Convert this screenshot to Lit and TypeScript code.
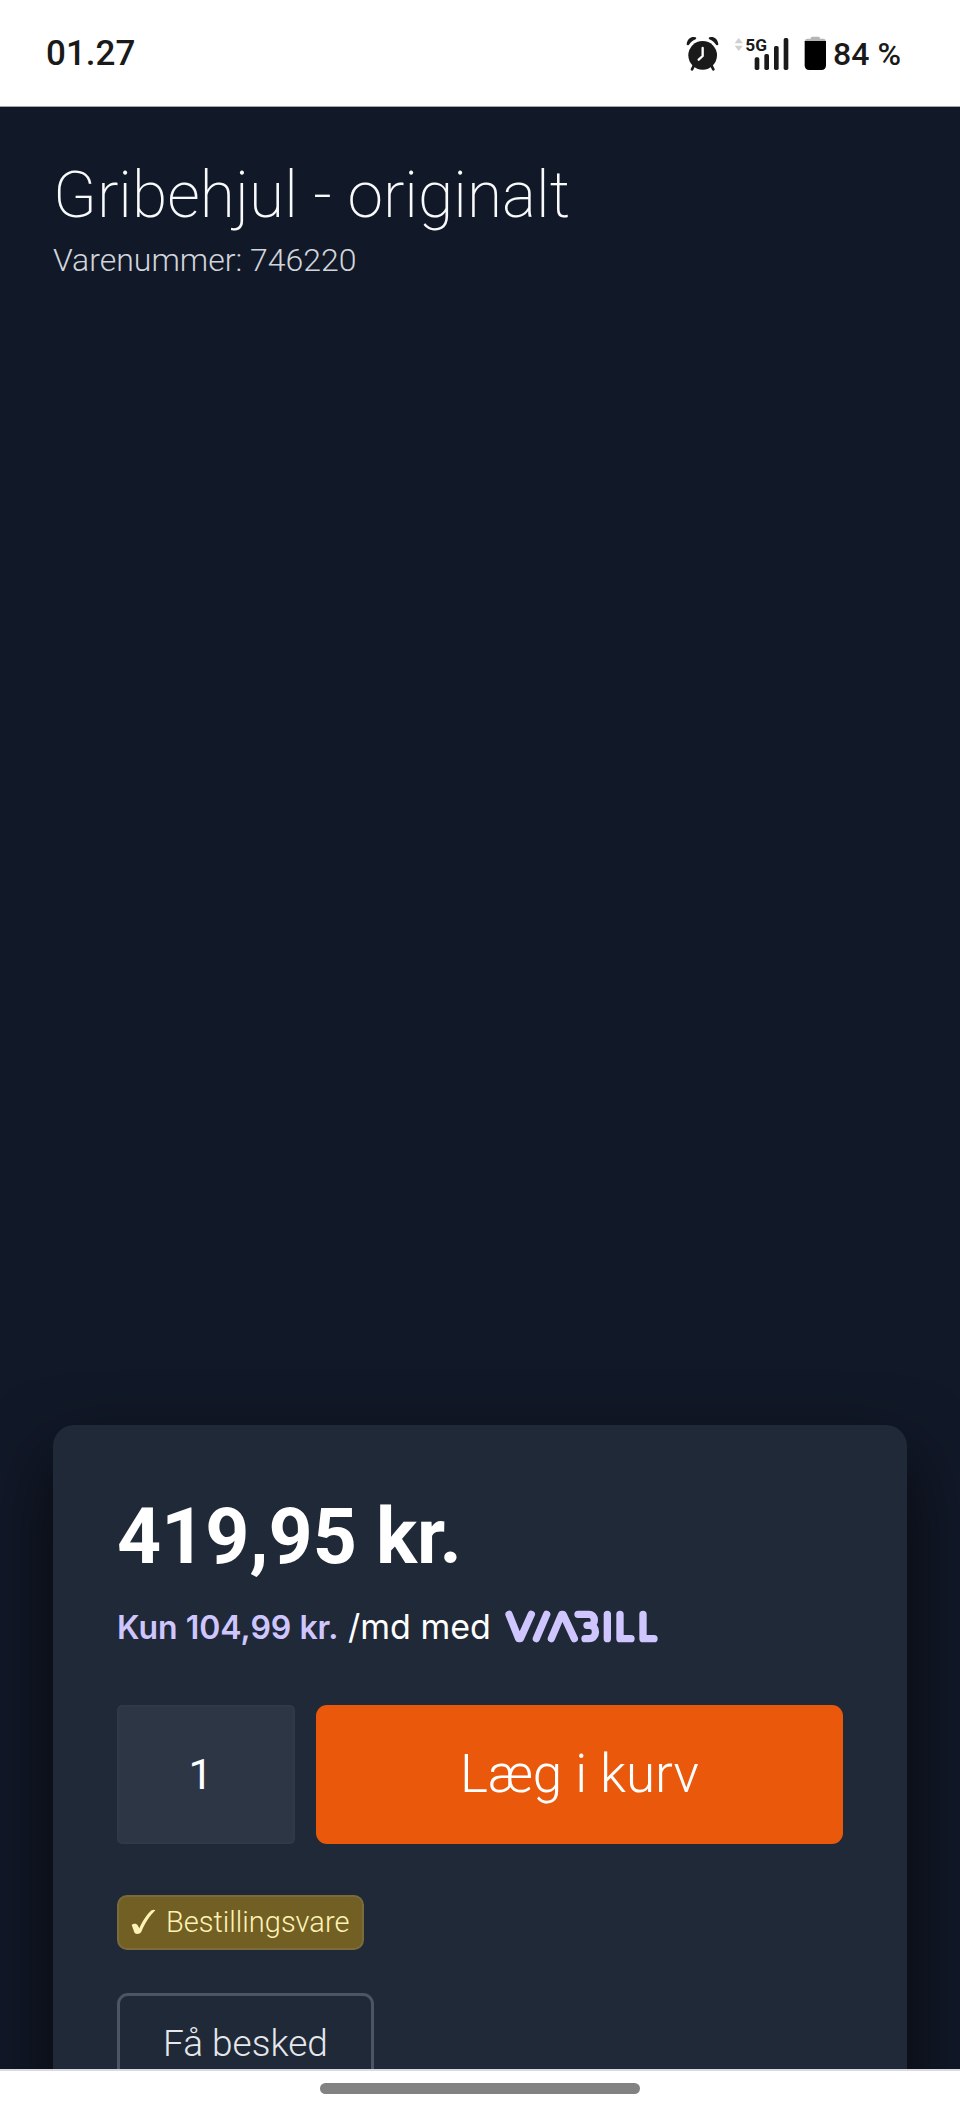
import { LitElement, html, css } from "lit";
import { customElement, state } from "lit/decorators.js";

@customElement("status-bar")
class StatusBar extends LitElement {
  static styles = css`
    :host {
      display: flex;
      flex: none;
      align-items: center;
      justify-content: space-between;
      box-sizing: border-box;
      height: 107px;
      padding: 1px 59px 0 46px;
      background: #fff;
      border-bottom: 1px solid #a3a5ae;
      color: #1a1a1a;
      font-weight: 500;
    }
    .time {
      font-size: 35px;
      line-height: 40px;
    }
    .right {
      display: flex;
      align-items: center;
      gap: 15px;
    }
    .battery {
      display: flex;
      align-items: center;
      gap: 6px;
      font-size: 32px;
      line-height: 40px;
    }
    svg {
      display: block;
    }
    .net {
      font: 700 52px Roboto, sans-serif;
    }
  `;

  render() {
    return html`
      <span class="time">01.27</span>
      <div class="right">
        <svg width="33" height="35" viewBox="0 0 99 105" aria-label="Alarm" role="img">
          <g fill="none" stroke="#1a1a1a" stroke-linecap="round">
            <path d="M24 88 18 100M76 88 82 100" stroke-width="8" />
          </g>
          <circle cx="50" cy="58" r="43" fill="#1a1a1a" />
          <path
            d="M2 25C4 8 16 1 28 4 31 5 32 8 29 10 20 14 14 19 9 26 6 29 2 28 2 25ZM97 25C95 8 83 1 71 4 68 5 67 8 70 10 79 14 85 19 90 26 93 29 97 28 97 25Z"
            fill="#1a1a1a"
          />
          <path d="M50 36V60L38 71" fill="none" stroke="#fff" stroke-width="7" stroke-linecap="round" stroke-linejoin="round" />
        </svg>
        <svg width="55" height="35" viewBox="0 0 165 105" aria-label="5G" role="img">
          <path d="M2 22 14 6 27 22ZM2 29H27L14 45Z" fill="#d0d0d0" />
          <text class="net" x="34" y="44" fill="#1a1a1a">5G</text>
          <g fill="#1a1a1a">
            <rect x="62" y="64" width="14" height="38" rx="5" />
            <rect x="91" y="54" width="14" height="48" rx="5" />
            <rect x="120" y="30" width="14" height="72" rx="5" />
            <rect x="149" y="6" width="14" height="96" rx="5" />
          </g>
        </svg>
        <span class="battery">
          <svg width="23" height="35" viewBox="0 0 69 105" aria-hidden="true">
            <path d="M24 2H44Q48 2 48 8H58Q65 8 66 18H2Q3 8 10 8H20Q20 2 24 2Z" fill="#b5b5b5" />
            <path d="M2 15H66V88Q66 102 52 102H16Q2 102 2 88Z" fill="#000" />
          </svg>
          84 %
        </span>
      </div>
    `;
  }
}

@customElement("viabill-logo")
class ViabillLogo extends LitElement {
  static styles = css`
    :host,
    svg {
      display: block;
    }
  `;

  render() {
    return html`
      <svg width="153" height="33" viewBox="0 0 459 99" role="img" aria-label="ViaBill">
        <g fill="none" stroke="#cfc6ff" stroke-width="22" stroke-linecap="round" stroke-linejoin="round">
          <path d="M12 13 41 86 46 86 79 13" />
          <path d="M125 13 94 86" />
          <path d="M139 86 170 13 174 13 208 86" />
          <path d="M219 13H252C273 13 273 46 254 46H246M254 46C278 47 277 86 252 86H240" />
          <path d="M307 13V86" />
          <path d="M345 13V86H378" />
          <path d="M414 13V86H447" />
        </g>
      </svg>
    `;
  }
}

@customElement("buy-card")
class BuyCard extends LitElement {
  @state() quantity = "1";

  static styles = css`
    :host {
      display: block;
      padding: 64px;
      background: #202937;
      border-radius: 21px;
      box-shadow: 0 32px 72px rgba(0, 0, 0, 0.65);
    }
    .price {
      margin: 0;
      color: #fff;
      font-size: 77px;
      font-weight: 700;
      line-height: 96px;
    }
    .finance {
      display: flex;
      align-items: center;
      gap: 14px;
      margin: 18px 0 54px;
      color: #fff;
      font-family: Inter, sans-serif;
      font-size: 34px;
      font-weight: 400;
      line-height: 48px;
      white-space: nowrap;
    }
    .finance b {
      color: #cfc6ff;
      font-size: 32px;
      font-weight: 600;
      line-height: 32px;
    }
    .order {
      display: flex;
      gap: 21px;
      height: 139px;
    }
    .qty {
      box-sizing: border-box;
      width: 178px;
      padding: 0 11px 0 0;
      border: 2px solid #303948;
      border-radius: 5px;
      background: #2d3644;
      color: #fff;
      font: 400 43px Roboto, sans-serif;
      text-align: center;
    }
    .add {
      flex: 1;
      border: 0;
      border-radius: 11px;
      background: #ea580c;
      color: #fff;
      font: 300 53px Roboto, sans-serif;
    }
    .badge {
      display: flex;
      align-items: center;
      gap: 10px;
      box-sizing: border-box;
      width: fit-content;
      height: 55px;
      margin: 51px 0 43px;
      padding: 0 13px 0 12px;
      border: 2px solid #7b6b3b;
      border-radius: 10px;
      background: #715f24;
      color: #fef3b4;
      font-size: 29px;
      line-height: 40px;
    }
    .notify {
      display: block;
      padding: 20px 43px;
      border: 3px solid #4b5563;
      border-radius: 11px;
      background: none;
      color: #e5e7eb;
      font: 300 37px/56px Roboto, sans-serif;
    }
  `;

  render() {
    return html`
      <p class="price">419,95 kr.</p>
      <p class="finance">
        <span><b>Kun 104,99 kr.</b> /md med</span>
        <viabill-logo></viabill-logo>
      </p>
      <div class="order">
        <input
          class="qty"
          type="text"
          inputmode="numeric"
          aria-label="Antal"
          .value=${this.quantity}
          @input=${(e: Event) => (this.quantity = (e.target as HTMLInputElement).value)}
        />
        <button class="add" type="button">Læg i kurv</button>
      </div>
      <div class="badge">
        <svg width="25" height="26" viewBox="0 0 75 78" aria-hidden="true">
          <path d="M2 48C7 42 18 43 20 49L25 58C36 34 48 15 62 4 66 2 72 2 73 4 56 20 41 45 31 68 27 76 12 77 10 70Z" fill="#fef3b4" />
        </svg>
        Bestillingsvare
      </div>
      <button class="notify" type="button">Få besked</button>
    `;
  }
}

@customElement("app-root")
class AppRoot extends LitElement {
  static styles = css`
    :host {
      display: flex;
      flex-direction: column;
      height: 100vh;
      overflow: hidden;
      background: #111827;
      font-family: Roboto, sans-serif;
      font-weight: 300;
    }
    main {
      flex: 1;
      min-height: 0;
      overflow: hidden;
      padding: 53px 53px 0;
    }
    header {
      padding-bottom: 2px;
    }
    h1 {
      margin: 0 0 4px;
      color: #f9fafb;
      font-size: 64px;
      font-weight: 200;
      line-height: 72px;
    }
    .sku {
      margin: 0;
      color: #d1d5db;
      font-size: 32px;
      line-height: 48px;
    }
    .media {
      aspect-ratio: 3 / 4;
    }
    footer {
      display: flex;
      flex: none;
      justify-content: center;
      box-sizing: border-box;
      height: 43px;
      padding-top: 12px;
      border-top: 2px solid #d9dae2;
      background: #fff;
    }
    .handle {
      width: 33.333%;
      height: 11px;
      border-radius: 6px;
      background: #828282;
    }
  `;

  render() {
    return html`
      <status-bar></status-bar>
      <main>
        <header>
          <h1>Gribehjul - originalt</h1>
          <p class="sku">Varenummer: 746220</p>
        </header>
        <div class="media"></div>
        <buy-card></buy-card>
      </main>
      <footer><div class="handle"></div></footer>
    `;
  }
}
